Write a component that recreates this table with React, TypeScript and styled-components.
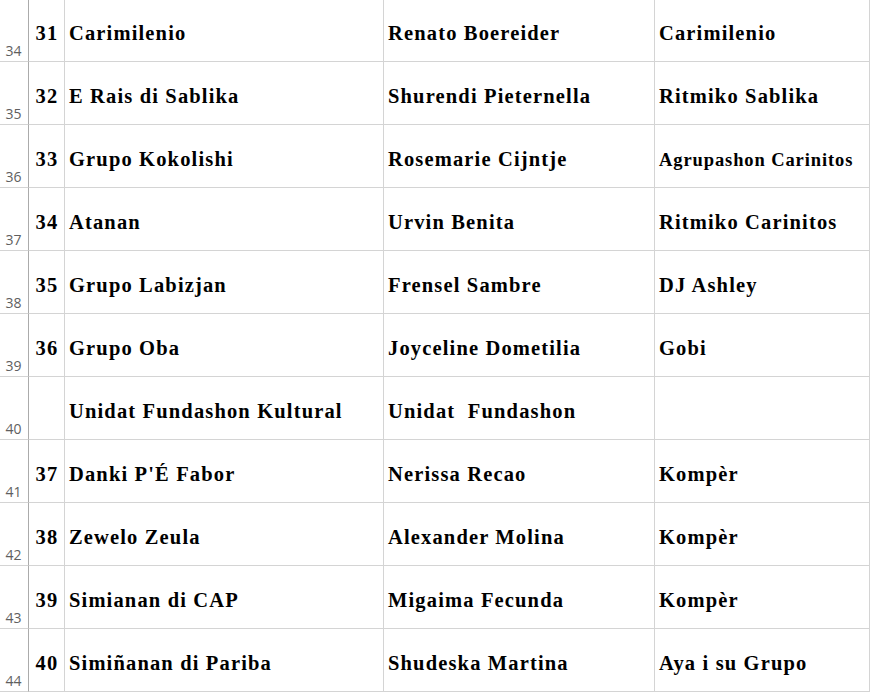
import React from 'react';
import styled, { createGlobalStyle } from 'styled-components';

const GlobalStyle = createGlobalStyle`
  html, body {
    margin: 0;
    padding: 0;
    background: #ffffff;
    overflow: hidden;
  }
`;

interface Row {
  line: number;
  num?: string;
  group: string;
  leader: string;
  band: string;
  small?: boolean;
}

const rows: Row[] = [
  { line: 34, num: '31', group: 'Carimilenio', leader: 'Renato Boereider', band: 'Carimilenio' },
  { line: 35, num: '32', group: 'E Rais di Sablika', leader: 'Shurendi Pieternella', band: 'Ritmiko Sablika' },
  { line: 36, num: '33', group: 'Grupo Kokolishi', leader: 'Rosemarie Cijntje', band: 'Agrupashon Carinitos', small: true },
  { line: 37, num: '34', group: 'Atanan', leader: 'Urvin Benita', band: 'Ritmiko Carinitos' },
  { line: 38, num: '35', group: 'Grupo Labizjan', leader: 'Frensel Sambre', band: 'DJ Ashley' },
  { line: 39, num: '36', group: 'Grupo Oba', leader: 'Joyceline Dometilia', band: 'Gobi' },
  { line: 40, group: 'Unidat Fundashon Kultural', leader: 'Unidat  Fundashon', band: '' },
  { line: 41, num: '37', group: "Danki P'É Fabor", leader: 'Nerissa Recao', band: 'Kompèr' },
  { line: 42, num: '38', group: 'Zewelo Zeula', leader: 'Alexander Molina', band: 'Kompèr' },
  { line: 43, num: '39', group: 'Simianan di CAP', leader: 'Migaima Fecunda', band: 'Kompèr' },
  { line: 44, num: '40', group: 'Simiñanan di Pariba', leader: 'Shudeska Martina', band: 'Aya i su Grupo' },
];

const SheetStyled = styled.div`
  display: grid;
  grid-template-columns: 29px 36px 319px 271px 215px;
  grid-auto-rows: 63px;
  width: 870px;
  margin-top: -1px;
`;

const RowHeaderStyled = styled.div`
  display: flex;
  align-items: flex-end;
  justify-content: center;
  box-sizing: border-box;
  border-right: 1px solid #ababab;
  border-bottom: 1px solid #d4d4d4;
  padding: 0 1px 1px 0;
  font-family: 'Open Sans', 'Noto Sans', sans-serif;
  font-size: 14px;
  line-height: 18px;
  color: #5f5f5f;
`;

const CellStyled = styled.div<{ $center?: boolean; $small?: boolean }>`
  display: flex;
  align-items: flex-start;
  justify-content: ${(p) => (p.$center ? 'center' : 'flex-start')};
  box-sizing: border-box;
  border-right: 1px solid #d4d4d4;
  border-bottom: 1px solid #d4d4d4;
  padding: ${(p) => (p.$small ? '23px' : '22px')} 0 0 ${(p) => (p.$center ? '1px' : '4px')};
  font-family: 'Liberation Serif', 'Times New Roman', serif;
  font-weight: bold;
  font-size: ${(p) => (p.$small ? '18.5px' : '20.5px')};
  letter-spacing: ${(p) => (p.$small ? '0.9px' : '1.15px')};
  line-height: 24px;
  color: #000000;
  white-space: pre;
  overflow: hidden;
`;

export default function App() {
  return (
    <>
      <GlobalStyle />
      <SheetStyled>
        {rows.map((row) => (
          <React.Fragment key={row.line}>
            <RowHeaderStyled>{row.line}</RowHeaderStyled>
            <CellStyled $center>{row.num ?? ''}</CellStyled>
            <CellStyled>{row.group}</CellStyled>
            <CellStyled>{row.leader}</CellStyled>
            <CellStyled $small={row.small}>{row.band}</CellStyled>
          </React.Fragment>
        ))}
      </SheetStyled>
    </>
  );
}
